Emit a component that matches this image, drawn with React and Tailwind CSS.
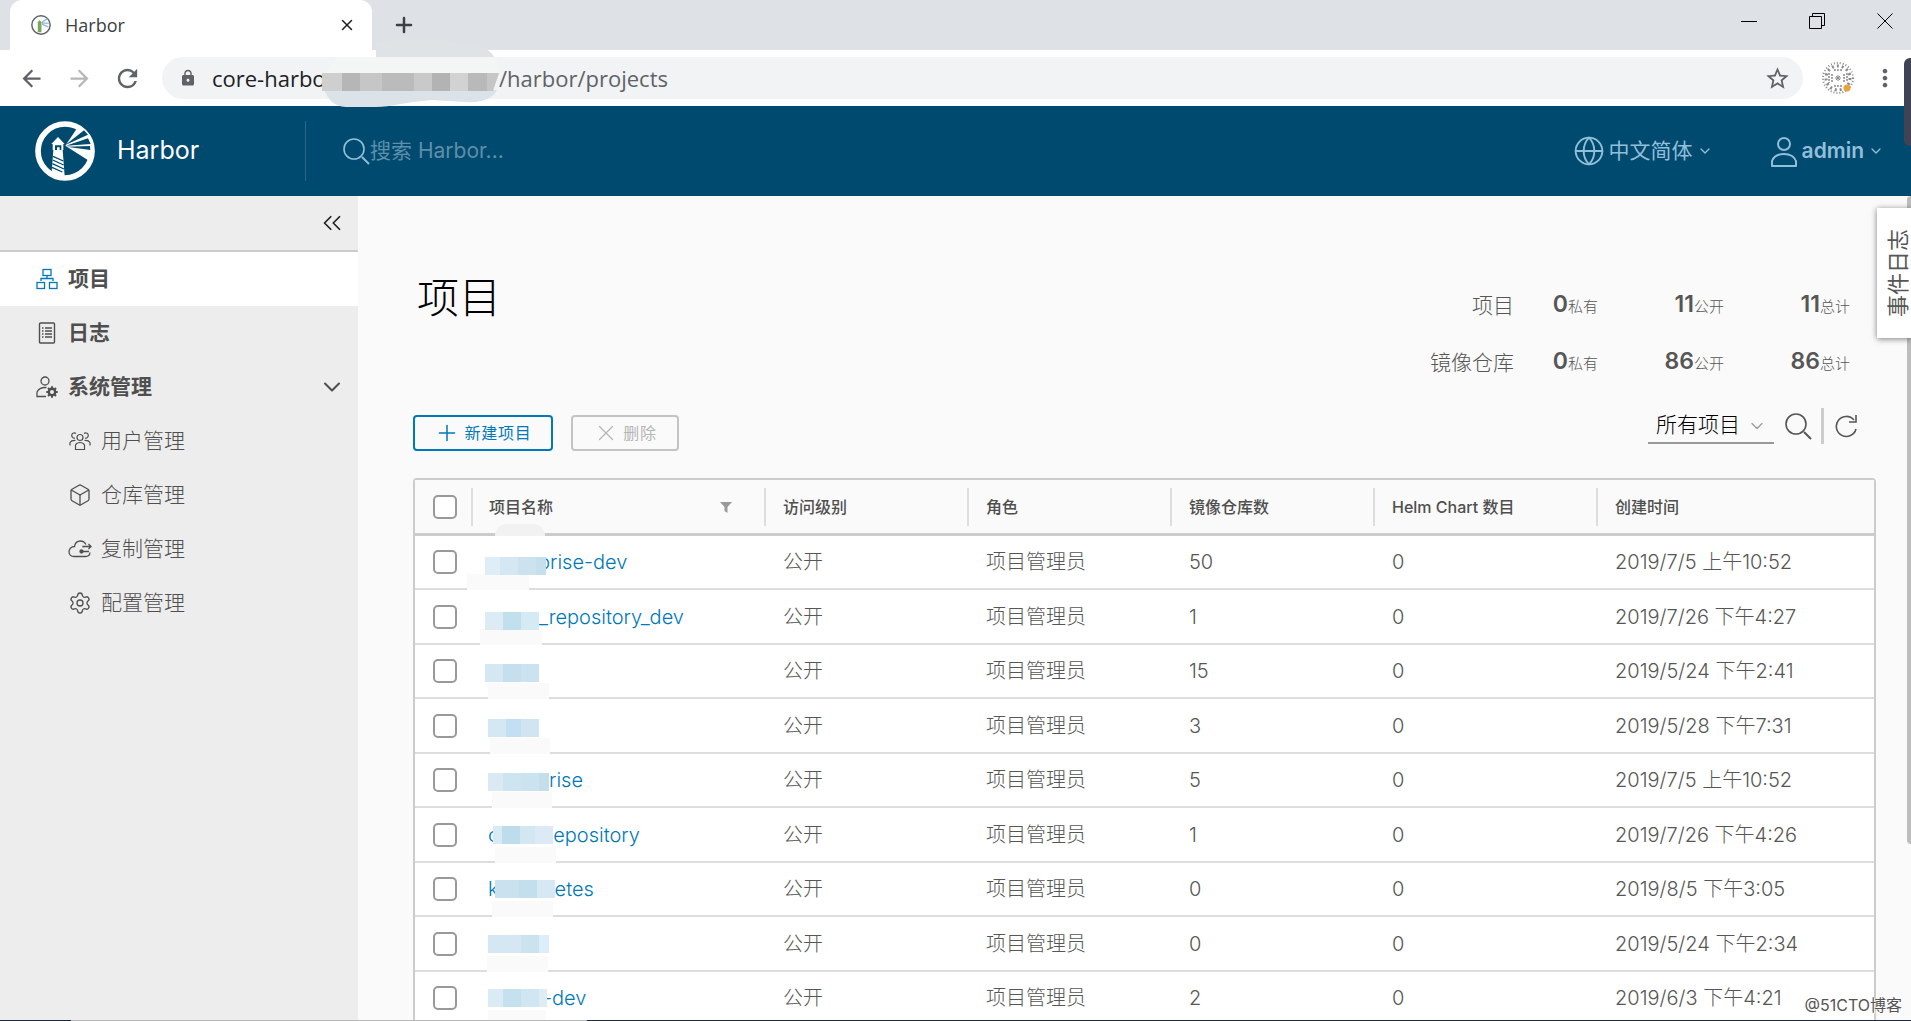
import { Box, ChevronDown, ChevronsLeft, Globe, Plus, Settings, X } from "lucide-react";
import { MdArrowBack, MdArrowForward, MdLock, MdMoreVert, MdRefresh, MdStarBorder } from "react-icons/md";

const projects = [
    {
        prefix: "",
        name: "prise-dev",
        count: 50,
        created: "2019/7/5 上午10:52",
        mosaic: ["w-[15px] bg-[#dfedf6]", "w-[18px] bg-[#d5e7f2]", "w-[18px] bg-[#cde2ef]", "w-[10px] bg-[#c6dfed]"],
        shift: "-ml-[3px] mt-2 -mr-2",
        patch: "-left-1 w-[62px]",
    },
    {
        prefix: "",
        name: "_repository_dev",
        count: 1,
        created: "2019/7/26 下午4:27",
        mosaic: ["w-[18px] bg-[#dcebf4]", "w-[18px] bg-[#c1dfec]", "w-[18px] bg-[#d6eaf5]"],
        shift: "-ml-[3px] mt-2",
        patch: "left-[9px] w-[62px]",
    },
    {
        prefix: "",
        name: "",
        count: 15,
        created: "2019/5/24 下午2:41",
        mosaic: ["w-[18px] bg-[#d5e7f2]", "w-[18px] bg-[#c5dfee]", "w-[18px] bg-[#cbe3f1]"],
        shift: "-ml-[3px] mt-1",
        patch: "left-[17px] w-[61px]",
    },
    {
        prefix: "",
        name: "",
        count: 3,
        created: "2019/5/28 下午7:31",
        mosaic: ["w-[18px] bg-[#d5e7f2]", "w-[15px] bg-[#c3e0f2]", "w-[18px] bg-[#d0e5f1]"],
        shift: "mt-1",
        patch: "left-[19px] w-[60px]",
    },
    {
        prefix: "",
        name: "rise",
        count: 5,
        created: "2019/7/5 上午10:52",
        mosaic: ["w-[15px] bg-[#dae9f3]", "w-[18px] bg-[#cfe4f1]", "w-[18px] bg-[#cbe2ef]", "w-[10px] bg-[#c4deec]"],
        shift: "mt-1",
        patch: "left-[21px] w-[60px]",
    },
    {
        prefix: "c",
        name: "epository",
        count: 1,
        created: "2019/7/26 下午4:26",
        mosaic: ["w-[9px] bg-[#d8eaf4]", "w-[18px] bg-[#bddcec]", "w-[15px] bg-[#d3e7f2]", "w-[18px] bg-[#dbeaf5]"],
        shift: "-ml-[6px]",
        patch: "left-6 w-[61px]",
    },
    {
        prefix: "k",
        name: "etes",
        count: 0,
        created: "2019/8/5 下午3:05",
        mosaic: ["w-[24px] bg-[#cae2ef]", "w-[18px] bg-[#c3deec]", "w-[18px] bg-[#d5e8f4]"],
        shift: "-ml-[4px]",
        patch: "left-[21px] w-[61px]",
    },
    {
        prefix: "",
        name: "",
        count: 0,
        created: "2019/5/24 下午2:34",
        mosaic: ["w-[33px] bg-[#d5e7f3]", "w-[18px] bg-[#cde2ef]", "w-[10px] bg-[#dceefa]"],
        shift: "",
        patch: "left-4 w-[61px]",
    },
    {
        prefix: "",
        name: "-dev",
        count: 2,
        created: "2019/6/3 下午4:21",
        mosaic: ["w-[15px] bg-[#dbebf5]", "w-[18px] bg-[#c5e0ee]", "w-[18px] bg-[#d1e6f3]", "w-[8px] bg-[#dfecf3]"],
        shift: "-mr-1",
        patch: "left-[17px] w-[58px]",
    },
];

const columns = ["访问级别", "角色", "镜像仓库数", "Helm Chart 数目", "创建时间"];

const stats = [
    { label: "项目", values: [["0", "私有"], ["11", "公开"], ["11", "总计"]] },
    { label: "镜像仓库", values: [["0", "私有"], ["86", "公开"], ["86", "总计"]] },
];

const HarborLogo = () => (
    <svg viewBox="105 62 180 180" className="size-[60px]">
        <circle cx="195" cy="152" r="81" fill="none" stroke="#fff" strokeWidth="17" />
        <path d="M196 136 L232 82 L262 96 L282 135 L282 155 L268 182 Z" fill="#fff" />
        <path d="M196 134 L252 90 L264 103 Z" fill="#004a70" />
        <path d="M198 136 L264 114 L272 131 Z" fill="#004a70" />
        <path d="M200 139 L270 137 L271 149 Z" fill="#004a70" />
        <g fill="#fff">
            <path d="M174 110 L194 131 H154 Z" />
            <path d="M158 131 H190 V149 H158 Z" />
            <path d="M160 149 H188 L194 228 H154 Z" />
        </g>
        <path d="M165 135 H184 V149 H179 V141 H171 V149 H165 Z" fill="#004a70" />
        <path d="M159 168 L190 182 M158 179 L191 194 M157 190 L192 206 M156 201 L187 215" stroke="#004a70" strokeWidth="4" />
    </svg>
);

const Favicon = () => (
    <svg viewBox="0 0 24 24" className="size-[22px]" fill="none">
        <circle cx="12" cy="12" r="10" stroke="#5f6368" strokeWidth="1.6" />
        <path d="M8.500 9 L10.500 6.500 L12.500 9 V20 H8.500 Z" fill="#7aa65a" />
        <path d="M13 9 L19 5 M13 10 H21 M13 11 L20 14" stroke="#8fb8dc" strokeWidth="1.500" />
    </svg>
);

const SearchIcon = ({ className }) => (
    <svg viewBox="0 0 28 28" className={className} fill="none" stroke="currentColor">
        <circle cx="12" cy="12" r="10" strokeWidth="1.6" />
        <path d="M20 20 L27 27" strokeWidth="2" />
    </svg>
);

const UserIcon = () => (
    <svg viewBox="0 0 28 32" className="h-8 w-7" fill="none" stroke="currentColor" strokeWidth="2">
        <circle cx="14" cy="9" r="6" />
        <path d="M2 31 V26 C4 21 9 19 14 19 S24 21 26 26 V31 Z" strokeLinejoin="round" />
    </svg>
);

const OrgIcon = () => (
    <svg viewBox="0 0 22 22" className="size-[22px] text-[#0079b8]" fill="none" stroke="currentColor" strokeWidth="1.3">
        <rect x="7" y="1.5" width="8" height="6" />
        <rect x="1" y="14.5" width="7.5" height="6" />
        <rect x="13.5" y="14.5" width="7.5" height="6" />
        <path d="M11 7.5 V10.5 M5 13 V10.5 H17 V13" />
    </svg>
);

const LogIcon = () => (
    <svg viewBox="0 0 22 22" className="size-[22px]" fill="none" stroke="currentColor" strokeWidth="1.4">
        <rect x="3.5" y="1" width="15" height="20" rx="1" />
        <path d="M6 6 H7.5 M9 6 H16 M6 9 H7.5 M9 9 H16 M6 12 H7.5 M9 12 H16 M6 15 H7.5 M9 15 H16" />
    </svg>
);

const AdminIcon = () => (
    <svg viewBox="0 0 22 22" className="size-[22px]" fill="none" stroke="currentColor" strokeWidth="1.3">
        <circle cx="9" cy="5" r="4" />
        <path d="M10 20.5 H1 V16 C2.500 13 5 11.500 9 11.500 H10.500" />
        <circle cx="16" cy="16" r="3.200" strokeWidth="2.400" />
        <path d="M16 10.300 V12.500 M16 19.500 V21.700 M10.300 16 H12.500 M19.500 16 H21.700 M12 12 L13.500 13.500 M18.500 18.500 L20 20 M20 12 L18.500 13.500 M13.500 18.500 L12 20" strokeWidth="2" />
    </svg>
);

const GroupIcon = () => (
    <svg viewBox="0 0 22 22" className="size-[22px]" fill="none" stroke="currentColor" strokeWidth="1.200">
        <circle cx="11" cy="7.500" r="3" />
        <path d="M6.500 19.500 V15 C7.500 13.200 9 12.500 11 12.500 S14.500 13.200 15.500 15 V19.500 Z" />
        <path d="M7 3.500 A2.600 2.600 0 1 0 6 8 M15 3.500 A2.600 2.600 0 1 1 16 8" />
        <path d="M1 15.500 V12.500 C2 10.800 3.500 10.300 6.500 10.500 M21 15.500 V12.500 C20 10.800 18.500 10.300 15.500 10.500" />
    </svg>
);

const CloudIcon = () => (
    <svg viewBox="0 0 24 22" className="h-[22px] w-6" fill="none" stroke="currentColor" strokeWidth="1.300">
        <path d="M18 6.500 C16.500 3.800 14.500 3 12.500 3 C9.500 3 7 5.200 6.500 8.500 C3.500 8.500 1 10.600 1 13.700 C1 16.700 3.300 18.500 6 18.500 H17.500 C20 18.500 21.800 17 22 14.500" />
        <path d="M23 8.500 H15 V9.500 M20.500 6 L23 8.500 L20.500 11 M13 13.500 H21" />
        <circle cx="13.500" cy="13.500" r="1.500" fill="currentColor" />
    </svg>
);

const ReloadIcon = () => (
    <svg viewBox="0 0 24 24" className="size-6" fill="none" stroke="currentColor" strokeWidth="1.6">
        <path d="M20 6 A10 10 0 1 0 22 15" />
        <path d="M22 1 V8 H15" />
    </svg>
);

const UrlBlur = () => (
    <svg viewBox="0 0 180 68" className="absolute -top-[17px] left-[159px] h-[68px] w-[180px]">
        <path d="M55 2 C90 -1 130 0 152 4 C165 8 171 12 173 17 L55 17 Z" fill="#dfe3e6" />
        <path d="M15 17 H175 L178 35 H3 Z" fill="#f4f5f5" />
        <path d="M3 50 H176 C172 58 162 63 145 62 L110 60 C85 62 70 67 55 67 H25 C12 66 8 60 3 50 Z" fill="#dbe2e8" />
        <rect x="1" y="33" width="20" height="18" fill="#cfcfcf" />
        <rect x="21" y="33" width="18" height="18" fill="#b6b6b6" />
        <rect x="39" y="33" width="22" height="18" fill="#c6c6c6" />
        <rect x="61" y="33" width="32" height="18" fill="#bbbbbb" />
        <rect x="93" y="33" width="18" height="18" fill="#c9c9c9" />
        <rect x="111" y="33" width="18" height="18" fill="#b3b3b3" />
        <rect x="129" y="33" width="18" height="18" fill="#d2d2d2" />
        <rect x="147" y="33" width="19" height="18" fill="#b9b9b9" />
        <path d="M166 33 H178 L172 51 H166 Z" fill="#c6c6c6" />
    </svg>
);

const Avatar = () => (
    <svg viewBox="0 0 34 34" className="size-[34px]" fill="none" stroke="#8a8a8a">
        <circle cx="17" cy="17" r="15" strokeWidth="2" strokeDasharray="1 2" />
        <circle cx="17" cy="17" r="12" strokeWidth="3" strokeDasharray="2 3" />
        <path d="M8 12 V22 M11 13 V21 M26 12 V20 M23 13 V21 M13 9 H21 M13 25 H21" strokeWidth="1.500" strokeDasharray="2 1" />
        <path d="M14 17 H20 M17 14 V20 M15 15 L19 19 M19 15 L15 19" strokeWidth="1" />
        <circle cx="26" cy="27" r="3.500" fill="#e8a33d" stroke="none" />
    </svg>
);

const Browser = () => (
    <div className="shrink-0 font-['Open_Sans','Noto_Sans_CJK_SC',sans-serif]">
        <div className="flex h-[50px] bg-[#dee1e6] pl-[10px]">
            <div className="flex w-[362px] items-center rounded-t-xl bg-white pr-4 pl-5 text-lg text-[#3c4043]">
                <Favicon />
                <span className="ml-[13px] flex-1">Harbor</span>
                <button aria-label="关闭标签页">
                    <X className="size-[18px] text-[#202124]" />
                </button>
            </div>
            <button aria-label="新标签页" className="ml-5">
                <Plus className="size-6 text-[#3c4043]" strokeWidth={2.5} />
            </button>
            <div className="ml-auto flex h-[42px] items-center gap-[52px] pr-[18px]">
                <button aria-label="最小化" className="h-px w-4 bg-black" />
                <button aria-label="还原">
                    <svg viewBox="0 0 16 16" className="size-4" fill="none" stroke="#000">
                        <path d="M0.500 3.500 H12.500 V15.500 H0.500 Z M3.500 3.500 V0.500 H15.500 V12.500 H12.500" />
                    </svg>
                </button>
                <button aria-label="关闭">
                    <svg viewBox="0 0 16 16" className="size-4" stroke="#000">
                        <path d="M0.500 0.500 L15.500 15.500 M15.500 0.500 L0.500 15.500" />
                    </svg>
                </button>
            </div>
        </div>
        <div className="flex h-14 items-center bg-white pr-3 pl-[18px] text-[#5f6368]">
            <button aria-label="后退"><MdArrowBack className="size-[27px]" /></button>
            <button aria-label="前进" className="ml-[21px] text-[#b5b7ba]"><MdArrowForward className="size-[27px]" /></button>
            <button aria-label="重新加载" className="ml-5"><MdRefresh className="size-[29px]" /></button>
            <div className="relative ml-5 flex h-[42px] flex-1 items-center rounded-full bg-[#f1f3f4] pr-3 pl-[17px] text-[22px] leading-[30px]">
                <MdLock className="size-[18px]" />
                <label htmlFor="url" className="ml-[15px] w-[112px] whitespace-nowrap text-[#202124]">core-harbo</label>
                <input id="url" defaultValue="/harbor/projects" className="ml-[175px] flex-1 bg-transparent outline-none" />
                <MdStarBorder className="size-[27px]" />
                <UrlBlur />
            </div>
            <div className="mr-4 ml-[18px]"><Avatar /></div>
            <button aria-label="菜单"><MdMoreVert className="size-[28px]" /></button>
        </div>
    </div>
);

const Header = () => (
    <header className="flex h-[90px] shrink-0 items-center bg-[#004a70] pr-[27px] pl-[35px] text-[21px] text-[#91bfd9]">
        <HarborLogo />
        <span className="ml-[22px] w-[188px] text-[25px] text-white">Harbor</span>
        <label htmlFor="search" className="flex h-[60px] items-center border-l border-[#2a6486] pl-9">
            <SearchIcon className="size-7" />
        </label>
        <input id="search" placeholder="搜索 Harbor..." className="flex-1 bg-transparent outline-none placeholder:text-[#5d8faa]" />
        <button className="flex items-center">
            <Globe className="mr-1 size-8" strokeWidth={1.4} />
            中文简体
            <ChevronDown className="ml-1 size-4" />
        </button>
        <button className="ml-[57px] flex items-center font-semibold">
            <UserIcon />
            <span className="ml-1">admin</span>
            <ChevronDown className="ml-1 size-4" />
        </button>
    </header>
);

const Sidebar = () => (
    <nav className="w-[358px] shrink-0 bg-[#ededed] text-[21px] text-[#4f4f4f]">
        <div className="flex h-14 items-center justify-end border-b-2 border-[#ccc] pr-[11px]">
            <button aria-label="收起">
                <ChevronsLeft className="size-[30px] text-[#222]" strokeWidth={1.4} />
            </button>
        </div>
        <a href="#projects" className="flex h-[54px] items-center bg-white pl-9 font-bold">
            <OrgIcon />
            <span className="ml-[10px]">项目</span>
        </a>
        <a href="#logs" className="flex h-[54px] items-center pl-9 font-bold">
            <LogIcon />
            <span className="ml-[10px]">日志</span>
        </a>
        <button className="flex h-[54px] w-full items-center pr-3 pl-9 font-bold">
            <AdminIcon />
            <span className="ml-[10px] flex-1 text-left">系统管理</span>
            <ChevronDown className="size-7" strokeWidth={1.8} />
        </button>
        <a href="#users" className="flex h-[54px] items-center pl-[69px] font-light">
            <GroupIcon />
            <span className="ml-[10px]">用户管理</span>
        </a>
        <a href="#registries" className="flex h-[54px] items-center pl-[68px] font-light">
            <Box className="size-6" strokeWidth={1.3} />
            <span className="ml-[9px]">仓库管理</span>
        </a>
        <a href="#replications" className="flex h-[54px] items-center pl-[68px] font-light">
            <CloudIcon />
            <span className="ml-[9px]">复制管理</span>
        </a>
        <a href="#configs" className="flex h-[54px] items-center pl-[68px] font-light">
            <Settings className="size-6" strokeWidth={1.3} />
            <span className="ml-[9px]">配置管理</span>
        </a>
    </nav>
);

const Checkbox = ({ label }) => (
    <input
        type="checkbox"
        aria-label={label}
        className="block size-6 appearance-none rounded-[5px] border-2 border-[#999] bg-white"
    />
);

const ProjectTable = () => (
    <div className="mt-[27px] rounded border-2 border-[#ccc] bg-white">
        <table className="w-full table-fixed border-separate border-spacing-0 text-left">
            <colgroup>
                <col className="w-14" />
                <col className="w-[293px]" />
                <col className="w-[203px]" />
                <col className="w-[203px]" />
                <col className="w-[203px]" />
                <col className="w-[223px]" />
                <col />
            </colgroup>
            <thead>
                <tr className="h-14 bg-[#fafafa] text-base text-[#4f4f4f]">
                    <th className="border-b-[3px] border-[#ccc] pl-[18px]"><Checkbox label="全选" /></th>
                    <th className="relative border-b-[3px] border-[#ccc] font-medium">
                        <div className="flex h-[38px] items-center justify-between border-l-2 border-[#ddd] pr-8 pl-4">
                            项目名称
                            <button aria-label="筛选">
                                <svg viewBox="0 0 12 12" className="size-3" fill="#9a9a9a">
                                    <path d="M0 1 H12 L7.500 6 V12 L4.500 10 V6 Z" />
                                </svg>
                            </button>
                        </div>
                        <span className="absolute left-6 -bottom-[3px] h-3 w-[50px] rounded-t-full bg-[#f2f2f2]" />
                    </th>
                    {columns.map((column) => (
                        <th key={column} className="border-b-[3px] border-[#ccc] font-medium">
                            <div className="flex h-[38px] items-center border-l-2 border-[#ddd] pl-[17px]">{column}</div>
                        </th>
                    ))}
                </tr>
            </thead>
            <tbody>
                {projects.map((project, index) => (
                    <tr
                        key={index}
                        className="h-[54px] text-[20px] font-light text-[#565656] even:h-[55px] [&>td]:border-b-2 [&>td]:border-[#ddd]"
                    >
                        <td className="pl-[18px]"><Checkbox label={"选择 " + project.name} /></td>
                        <td className="relative pl-[17px]">
                            <span className={"absolute -bottom-[2px] h-4 bg-[#fafafa] " + project.patch} />
                            <a href="#project" className="relative flex items-center text-[#0079b8]">
                                <span>{project.prefix}</span>
                                <span className={"relative z-10 flex h-[18px] " + project.shift}>
                                    {project.mosaic.map((block, i) => (
                                        <span key={i} className={block} />
                                    ))}
                                </span>
                                <span>{project.name}</span>
                            </a>
                        </td>
                        <td className="pl-[19px]">公开</td>
                        <td className="pl-[19px]">项目管理员</td>
                        <td className="pl-[19px]">{project.count}</td>
                        <td className="pl-[19px]">0</td>
                        <td className="pl-[19px]">{project.created}</td>
                    </tr>
                ))}
            </tbody>
        </table>
    </div>
);

const App = () => {
    return (
        <div className="relative flex h-screen flex-col overflow-hidden bg-[#fafafa] font-['Inter','Noto_Sans_CJK_SC',sans-serif]">
            <Browser />
            <Header />
            <div className="flex min-h-0 flex-1">
                <Sidebar />
                <main className="min-w-0 flex-1 pr-[35px] pl-[55px]">
                    <div className="flex justify-between pt-[72px] pr-[26px] pl-1">
                        <h1 className="text-[42px] leading-[60px] font-light text-black">项目</h1>
                        <div className="pt-[22px] text-[#565656]">
                            {stats.map((row) => (
                                <div key={row.label} className="flex h-[57px] items-start justify-end">
                                    <span className="text-[21px] leading-8 font-light">{row.label}</span>
                                    {row.values.map(([value, label], i) => (
                                        <span key={i} className={i === 0 ? "w-[84px] text-right leading-7" : "w-[126px] text-right leading-7"}>
                                            <span className="text-[23px] font-semibold">{value}</span>
                                            <span className="text-[15px] font-light">{label}</span>
                                        </span>
                                    ))}
                                </div>
                            ))}
                        </div>
                    </div>
                    <div className="mt-1 flex h-[43px] items-end">
                        <button className="flex h-9 w-[140px] items-center justify-center rounded border-2 border-[#0079b8] text-base tracking-wider text-[#0079b8]">
                            <Plus className="mr-1 size-[26px]" strokeWidth={1.4} />
                            新建项目
                        </button>
                        <button disabled className="ml-[18px] flex h-9 w-[108px] items-center justify-center rounded border-2 border-[#c4c4c4] text-base tracking-wider text-[#b5b5b5]">
                            <X className="mr-1 size-[26px]" strokeWidth={1.2} />
                            删除
                        </button>
                        <div className="mr-[18px] ml-auto flex items-center self-start text-[#565656]">
                            <div className="relative mr-[10px]">
                                <select aria-label="项目筛选" className="block h-9 w-[126px] appearance-none border-b-2 border-[#999] bg-transparent pl-2 text-[21px] font-light text-black">
                                    <option>所有项目</option>
                                </select>
                                <ChevronDown className="pointer-events-none absolute top-2 right-[7px] size-5 text-[#999]" strokeWidth={1.5} />
                            </div>
                            <button aria-label="搜索"><SearchIcon className="block size-7" /></button>
                            <span className="mr-[10px] ml-[9px] h-9 w-[3px] bg-[#ccc]" />
                            <button aria-label="刷新"><ReloadIcon /></button>
                        </div>
                    </div>
                    <ProjectTable />
                </main>
            </div>

            {/* scrollbar and floating layers */}
            <div className="absolute top-[196px] right-0 h-[648px] w-1 rounded-l bg-[#bdbdbd]" />
            <div className="absolute top-[58px] right-0 h-[88px] w-[7px] rounded-l-md bg-[#3f4354]" />
            <button className="absolute top-[208px] right-0 flex h-[130px] w-[34px] items-center justify-end bg-white text-[22px] leading-[26px] text-[#565656] shadow-[0_1px_6px_rgba(0,0,0,0.5)]">
                <span className="rotate-180 [text-orientation:sideways] [writing-mode:vertical-rl]">事件日志</span>
            </button>
            <div className="absolute right-[9px] bottom-1 text-base leading-6 text-[#555] [text-shadow:1px_1px_0_#fff]">@51CTO博客</div>
            <div className="absolute bottom-0 flex h-px w-full">
                <span className="w-[71px] bg-[#1b2a3f]" />
                <span className="w-[516px] bg-[#b8b8b8]" />
                <span className="flex-1 bg-[#1b2a3f]" />
            </div>
        </div>
    );
};

export default App;
